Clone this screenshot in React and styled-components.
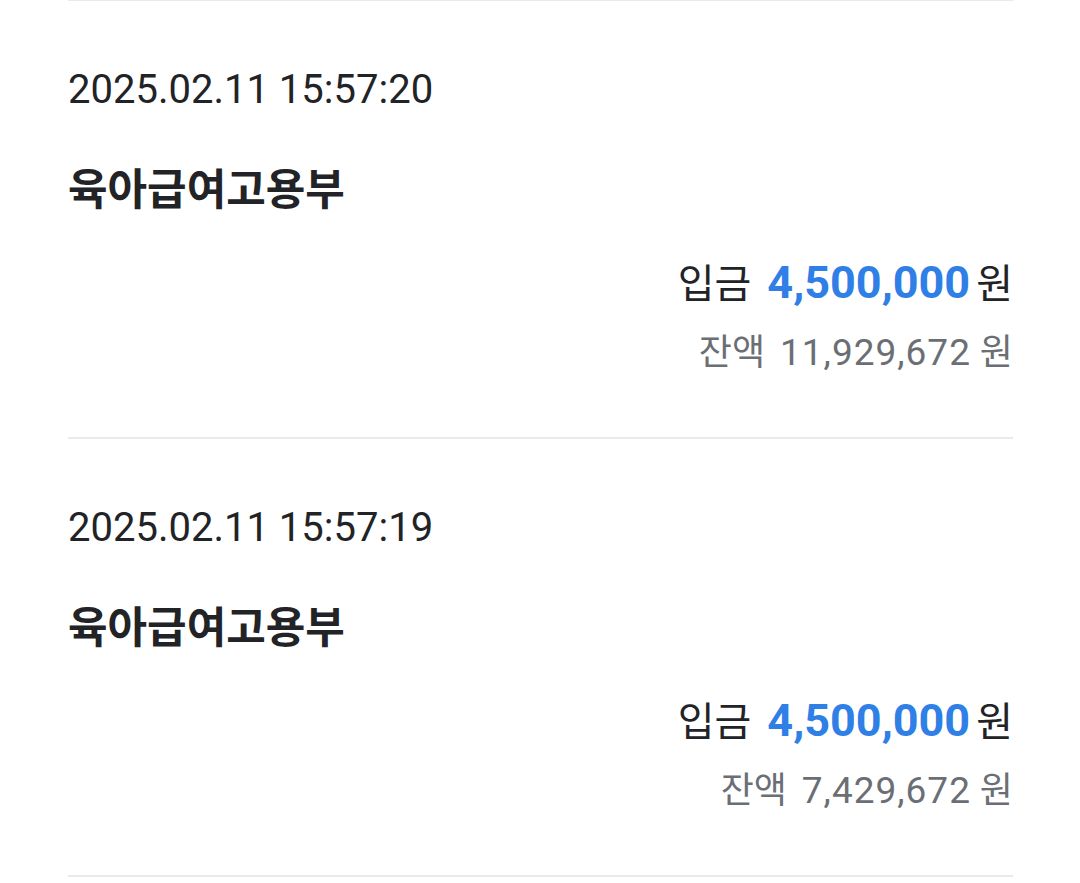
import React from "react";
import styled, { createGlobalStyle } from "styled-components";

const GlobalStyle = createGlobalStyle`
  html, body {
    margin: 0;
    padding: 0;
    background: #ffffff;
  }
  body {
    font-family: Roboto, "Noto Sans CJK KR", sans-serif;
    color: #222326;
  }
`;

const transactions = [
  {
    id: 1,
    time: "2025.02.11 15:57:20",
    name: "육아급여고용부",
    type: "입금",
    amount: "4,500,000",
    balance: "11,929,672",
  },
  {
    id: 2,
    time: "2025.02.11 15:57:19",
    name: "육아급여고용부",
    type: "입금",
    amount: "4,500,000",
    balance: "7,429,672",
  },
];

function App() {
  return (
    <>
      <GlobalStyle />
      <List>
        {transactions.map((tx) => (
          <Item key={tx.id}>
            <Time>{tx.time}</Time>
            <Name>{tx.name}</Name>
            <Amounts>
              <AmountLine>
                {tx.type} <Amount>{tx.amount}</Amount>원
              </AmountLine>
              <Balance>
                잔액 <BalanceNum>{tx.balance}</BalanceNum> 원
              </Balance>
            </Amounts>
          </Item>
        ))}
      </List>
    </>
  );
}

export default App;

const List = styled.div`
  margin: 0 67px 0 68px;
  border-top: 1px solid #e8eaec;
`;

const Item = styled.div`
  display: flex;
  flex-direction: column;
  padding: 65px 0 62px;
  border-bottom: 2px solid #e8eaec;
`;

const Time = styled.div`
  font-family: Roboto, sans-serif;
  font-size: 40px;
  line-height: 48px;
  color: #222326;
`;

const Name = styled.div`
  margin-top: 46px;
  font-family: "Noto Sans CJK KR", sans-serif;
  font-size: 43px;
  font-weight: 700;
  line-height: 52px;
  color: #222326;
`;

const Amounts = styled.div`
  display: flex;
  flex-direction: column;
  align-items: flex-end;
  margin-top: 45px;
`;

const AmountLine = styled.div`
  font-size: 40px;
  line-height: 52px;
  color: #222326;
  white-space: nowrap;
`;

const Amount = styled.span`
  margin: 0 6px 0 6px;
  font-family: Roboto, sans-serif;
  font-size: 45px;
  font-weight: 700;
  color: #2f7fe6;
`;

const Balance = styled.div`
  margin-top: 20px;
  font-size: 36px;
  line-height: 44px;
  color: #6b6f75;
  white-space: nowrap;
`;

const BalanceNum = styled.span`
  margin-left: 6px;
  font-family: Roboto, sans-serif;
  font-size: 37px;
  letter-spacing: 1px;
`;
